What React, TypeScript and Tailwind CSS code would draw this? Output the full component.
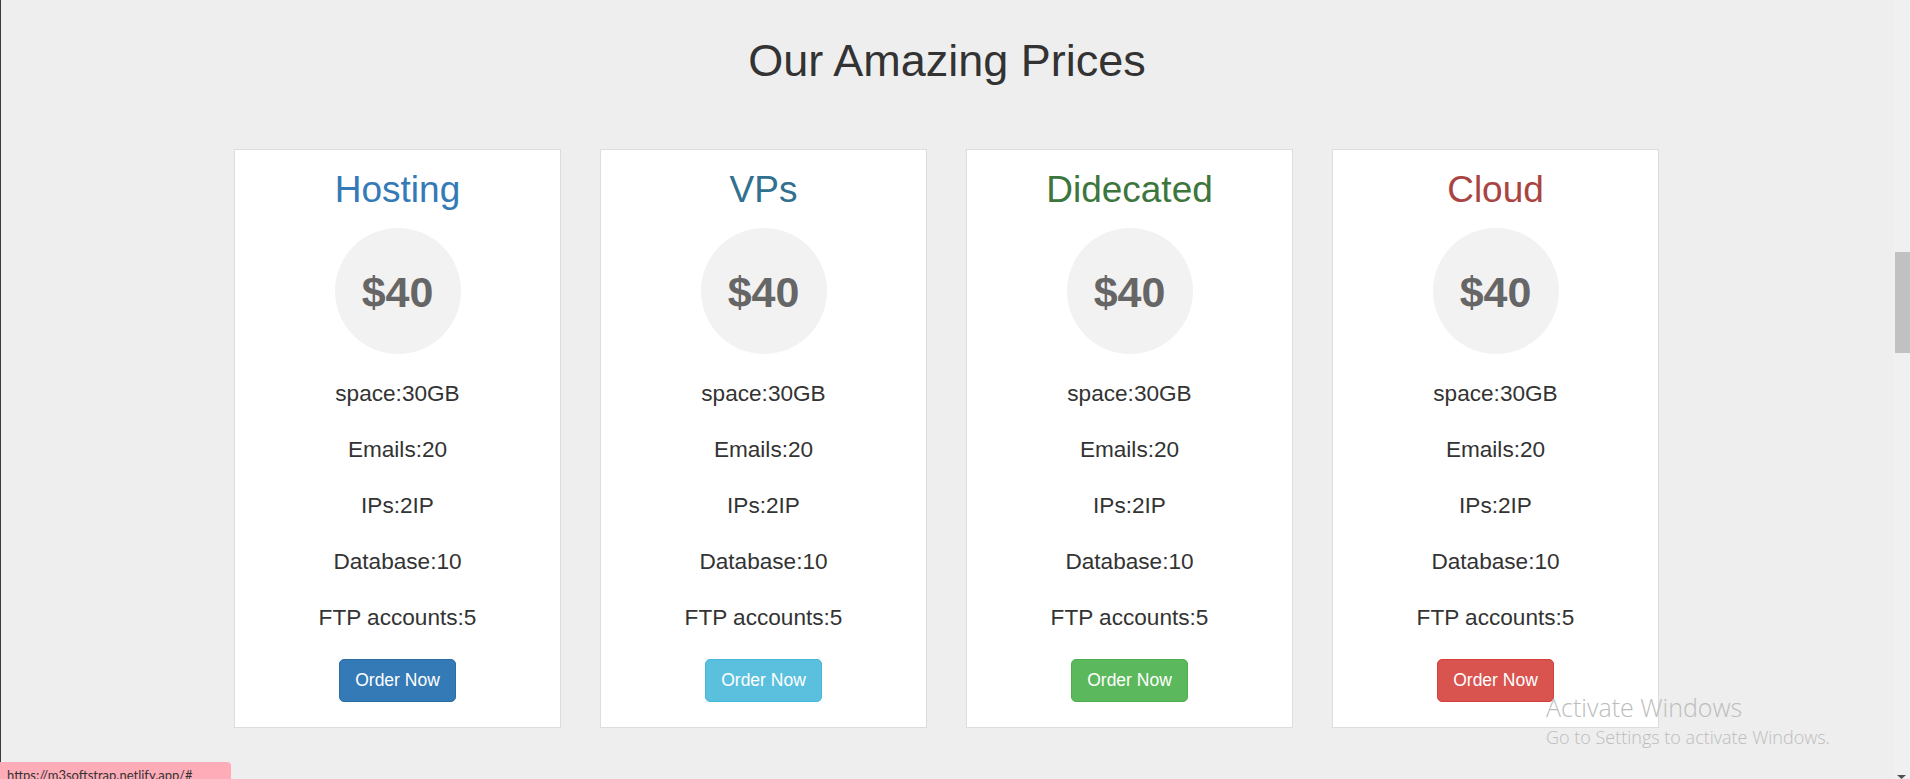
const plans = [
  { name: 'Hosting', title: 'text-[#337ab7]', btn: 'bg-[#337ab7] border-[#2e6da4]' },
  { name: 'VPs', title: 'text-[#31708f]', btn: 'bg-[#5bc0de] border-[#46b8da]' },
  { name: 'Didecated', title: 'text-[#3c763d]', btn: 'bg-[#5cb85c] border-[#4cae4c]' },
  { name: 'Cloud', title: 'text-[#a94442]', btn: 'bg-[#d9534f] border-[#d43f3a]' },
];

const features = ['space:30GB', 'Emails:20', 'IPs:2IP', 'Database:10', 'FTP accounts:5'];

function PriceCard({ name, title, btn }: { name: string; title: string; btn: string }) {
  return (
    <div className="flex h-[579px] w-[327px] flex-col items-center border border-[#dddddd] bg-white pt-[20px]">
      <h2 className={`text-[37px] leading-[40px] ${title}`}>{name}</h2>
      <div className="mt-[18px] flex h-[126px] w-[126px] items-center justify-center rounded-full bg-[#f2f2f2] pt-[3px]">
        <span className="text-[43px] font-bold leading-none text-[#666666]">$40</span>
      </div>
      <ul className="mt-[12px] flex flex-col items-center">
        {features.map((f) => (
          <li key={f} className="flex h-[56px] items-center text-[22.6px] text-[#333333]">
            {f}
          </li>
        ))}
      </ul>
      <button
        className={`mt-[13px] h-[43px] w-[117px] rounded-[5px] border text-[17.5px] text-white ${btn}`}
      >
        Order Now
      </button>
    </div>
  );
}

export default function App() {
  return (
    <div className="relative flex h-[779px] w-[1910px] overflow-hidden bg-[#eeeeee] font-['Liberation_Sans',Arial,sans-serif]">
      <div className="w-px bg-[#3b3b3b]" />
      <main className="flex flex-1 flex-col items-center">
        <h1 className="mt-[35px] text-[45px] leading-[52px] text-[#333333]">Our Amazing Prices</h1>
        <div className="mr-[1px] mt-[62px] flex gap-[39px]">
          {plans.map((p) => (
            <PriceCard key={p.name} {...p} />
          ))}
        </div>
      </main>

      {/* scrollbar */}
      <div className="flex w-[17px] flex-col items-end bg-[#f0f0f0]">
        <div className="mt-[252px] h-[101px] w-[15px] bg-[#c1c1c1]" />
        <div className="mt-auto flex w-full justify-center">
          <svg width="9" height="4" viewBox="0 0 9 4">
            <path d="M0 0h9L4.5 4z" fill="#505050" />
          </svg>
        </div>
      </div>

      {/* windows watermark */}
      <div className="pointer-events-none absolute left-[1546px] top-[691px] font-['Open_Sans',sans-serif] font-light text-[#bdbdbd]">
        <div className="text-[25px] leading-[33px]">Activate Windows</div>
        <div className="text-[18px] leading-[26px]">Go to Settings to activate Windows.</div>
      </div>

      {/* link status */}
      <div className="absolute bottom-0 left-0 h-[17px] w-[231px] overflow-hidden rounded-tr-[4px] bg-[#ffacb9] pl-[7px] pt-[5px] font-['Lato',sans-serif] text-[13px] leading-[16px] text-[#333333]">
        https://m3softstrap.netlify.app/#
      </div>
    </div>
  );
}
